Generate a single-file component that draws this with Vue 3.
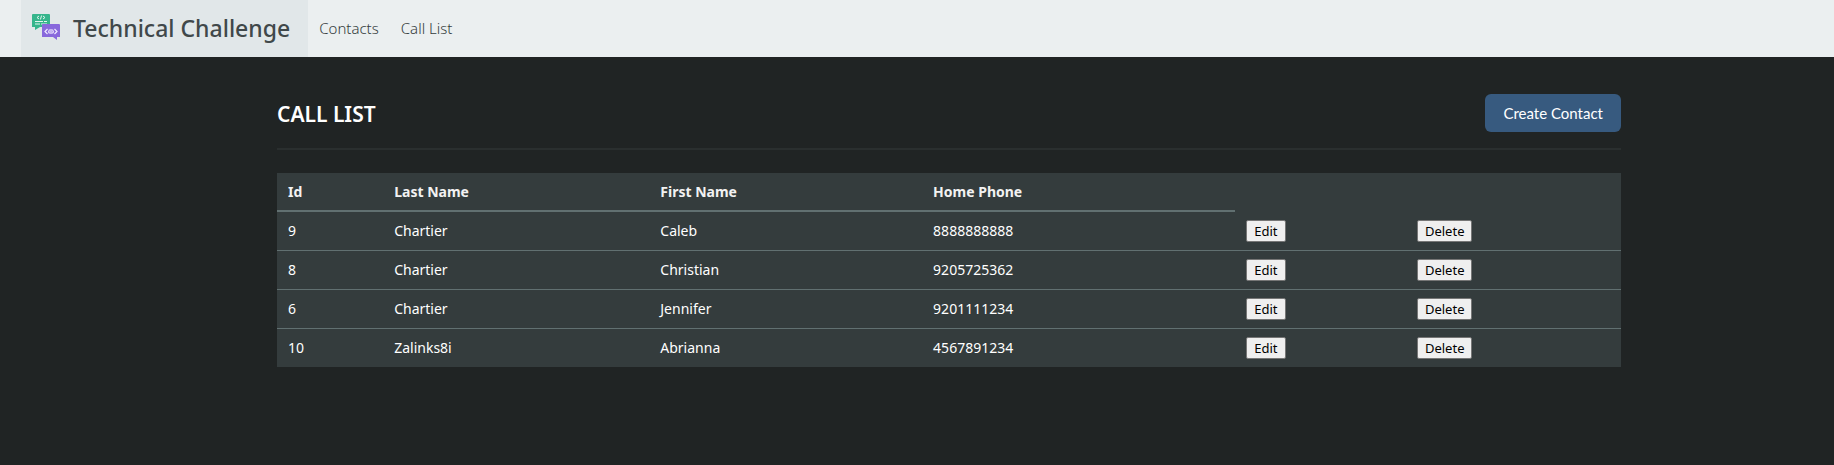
<script setup>
const contacts = [
  { id: 9, last: 'Chartier', first: 'Caleb', phone: '8888888888' },
  { id: 8, last: 'Chartier', first: 'Christian', phone: '9205725362' },
  { id: 6, last: 'Chartier', first: 'Jennifer', phone: '9201111234' },
  { id: 10, last: 'Zalinks8i', first: 'Abrianna', phone: '4567891234' },
]
</script>

<template>
  <nav class="navbar">
    <a class="brand" href="#">
      <svg class="logo" viewBox="0 0 28 27" aria-hidden="true">
        <path fill="#36b58c" d="M1 0h16q1 0 1 1v12H8l-5 3v-3H0V1q0-1 1-1z" />
        <path fill="none" stroke="#e2f5ee" stroke-width="1" d="M7 2 5 3.500 7 5M11 2l2 1.500L11 5M9.600 1.500 8.400 5.500M3 7.500h8M12 7.500h3M3 10h5M9 10h6" />
        <path fill="#8868dc" d="M11 10h16q1 0 1 1v12h-3v3l-4-3H10V11q0-1 1-1z" />
        <path fill="none" stroke="#efe9ff" stroke-width="1.200" d="M15.500 15 13 17.500l2.500 2.500M22.500 15l2.500 2.500-2.500 2.500M17.500 15.500q-1.500 2 0 4M20.500 15.500q1.500 2 0 4M19 15v5" />
      </svg>
      <span>Technical Challenge</span>
    </a>
    <a class="link" href="#contacts">Contacts</a>
    <a class="link" href="#calls">Call List</a>
  </nav>
  <main class="page">
    <div class="container">
      <header class="heading">
        <h1>CALL LIST</h1>
        <button class="create" type="button">Create Contact</button>
      </header>
      <table>
        <colgroup>
          <col class="c-id" /><col class="c-last" /><col class="c-first" />
          <col class="c-phone" /><col class="c-edit" /><col />
        </colgroup>
        <thead>
          <tr>
            <th scope="col">Id</th>
            <th scope="col">Last Name</th>
            <th scope="col">First Name</th>
            <th scope="col">Home Phone</th>
          </tr>
        </thead>
        <tbody>
          <tr v-for="c in contacts" :key="c.id">
            <td>{{ c.id }}</td>
            <td>{{ c.last }}</td>
            <td>{{ c.first }}</td>
            <td>{{ c.phone }}</td>
            <td><button class="action" type="button">Edit</button></td>
            <td><button class="action" type="button">Delete</button></td>
          </tr>
        </tbody>
      </table>
    </div>
  </main>
</template>

<style>
body {
  margin: 0;
  background: #202424;
}
</style>

<style scoped>
.navbar,
.page {
  font-family: "Noto Sans", "Open Sans", sans-serif;
}
.navbar {
  display: flex;
  height: 57px;
  padding-left: 21px;
  background: #ebeff0;
}
.brand {
  display: flex;
  align-items: center;
  gap: 13px;
  padding: 0 18px 2px 11px;
  background: #e1e7e9;
  color: #40484a;
  font-size: 23px;
  font-weight: 500;
  line-height: 32px;
  text-decoration: none;
}
.logo {
  width: 28px;
  height: 27px;
}
.link {
  display: flex;
  align-items: center;
  padding: 0 11px 2px;
  color: #343c3d;
  font-size: 15px;
  font-weight: 300;
  text-decoration: none;
}
.page {
  padding: 37px 0 48px 64px;
  color: #fff;
}
.container {
  max-width: 1344px;
  margin: 0 auto;
}
.heading {
  display: flex;
  align-items: center;
  justify-content: space-between;
  margin-bottom: 23px;
  padding-bottom: 16px;
  border-bottom: 2px solid #2a2f2f;
}
h1 {
  margin: 0;
  padding-top: 2px;
  font-size: 21px;
  line-height: 28px;
  font-weight: 600;
}
.create {
  height: 38px;
  padding: 0 18px;
  border: 0;
  border-radius: 6px;
  background: #375a7f;
  color: #fff;
  font-family: Lato, sans-serif;
  font-size: 15px;
}
table {
  width: 100%;
  table-layout: fixed;
  border-spacing: 0;
  background: #343c3d;
  font-size: 14px;
  line-height: 22px;
}
.c-id { width: 7.9%; }
.c-last { width: 19.8%; }
.c-first { width: 20.3%; }
.c-phone { width: 23.3%; }
.c-edit { width: 12.7%; }
th,
td {
  padding: 8px 11px;
  text-align: left;
  vertical-align: middle;
}
th {
  padding: 8px 11px 7px;
  border-bottom: 2px solid #617071;
  color: #f2f2f2;
  font-weight: 700;
}
td {
  border-bottom: 1px solid #617071;
}
tbody tr:last-child td {
  border-bottom: 0;
}
.action {
  display: block;
  height: 22px;
  padding: 0 7px;
  border: 1px solid #767676;
  border-radius: 2px;
  background: #efefef;
  color: #000;
  font-family: inherit;
  font-size: 13px;
  line-height: 20px;
}
</style>
